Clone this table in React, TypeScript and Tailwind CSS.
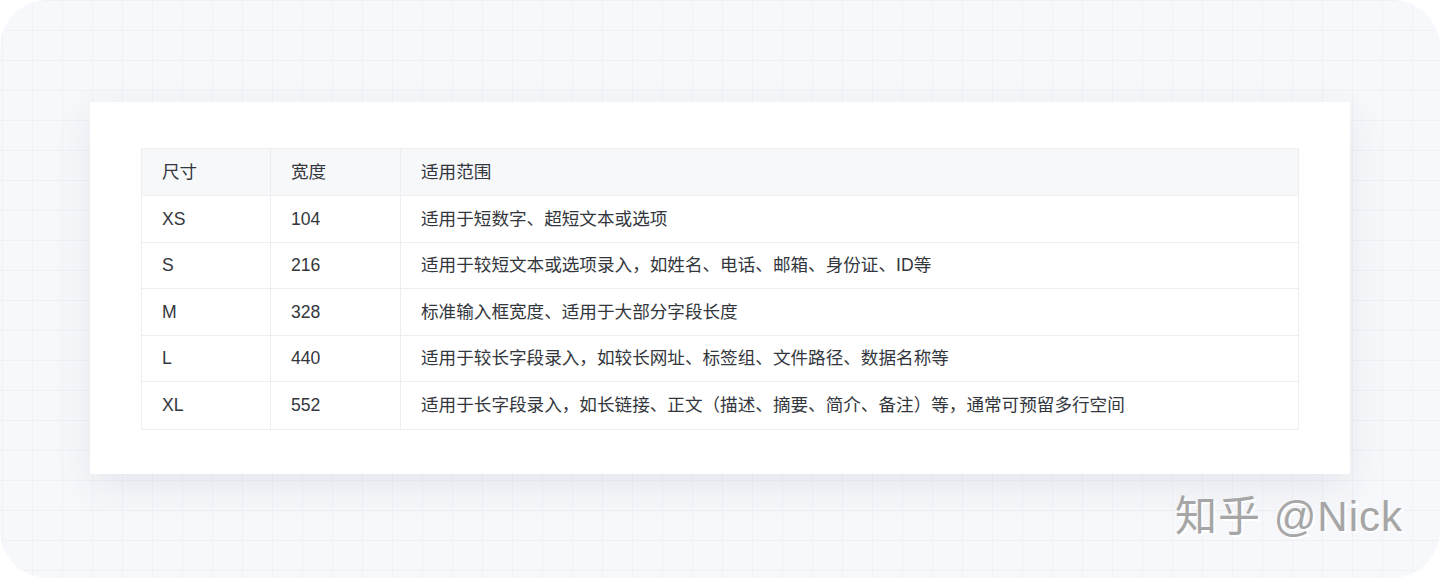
import React from "react";

const rows: [string, string, string][] = [
  ["XS", "104", "适用于短数字、超短文本或选项"],
  ["S", "216", "适用于较短文本或选项录入，如姓名、电话、邮箱、身份证、ID等"],
  ["M", "328", "标准输入框宽度、适用于大部分字段长度"],
  ["L", "440", "适用于较长字段录入，如较长网址、标签组、文件路径、数据名称等"],
  ["XL", "552", "适用于长字段录入，如长链接、正文（描述、摘要、简介、备注）等，通常可预留多行空间"],
];

export default function App() {
  return (
    <div className="w-[1440px] h-[578px] bg-white overflow-hidden font-['Liberation_Sans','Noto_Sans_CJK_SC',sans-serif]">
      <div className="relative h-full rounded-[48px] bg-[#f7f8fb] bg-[linear-gradient(to_right,#eff1f5_1px,transparent_1px),linear-gradient(to_bottom,#eff1f5_1px,transparent_1px)] bg-[size:30px_30px] bg-[position:2px_0px] pt-[102px] px-[90px]">
        <div className="h-[372px] bg-white shadow-[0_12px_36px_rgba(40,50,90,0.09)] pt-[46px] px-[51px]">
          <div className="border border-[#eceef1] text-[17.6px] text-[#33373d]">
            <div className="grid grid-cols-[129px_130px_1fr] h-[47px] bg-[#f7f8fa] border-b border-[#eceef1]">
              <div className="flex items-center pl-[20px] border-r border-[#eceef1]">尺寸</div>
              <div className="flex items-center pl-[20px] border-r border-[#eceef1]">宽度</div>
              <div className="flex items-center pl-[20px]">适用范围</div>
            </div>
            {rows.map((r, i) => (
              <div
                key={r[0]}
                className={`grid grid-cols-[129px_130px_1fr] h-[46.5px] ${i < rows.length - 1 ? "border-b border-[#eceef1]" : ""}`}
              >
                <div className="flex items-center pl-[20px] border-r border-[#eceef1]">{r[0]}</div>
                <div className="flex items-center pl-[20px] border-r border-[#eceef1]">{r[1]}</div>
                <div className="flex items-center pl-[20px]">{r[2]}</div>
              </div>
            ))}
          </div>
        </div>
        <div className="absolute left-[1175px] top-[496px] text-[42px] leading-none text-[#a6a6a6] [text-shadow:2px_2px_0_#ffffff] tracking-[1px]">
          知乎 @Nick
        </div>
      </div>
    </div>
  );
}
